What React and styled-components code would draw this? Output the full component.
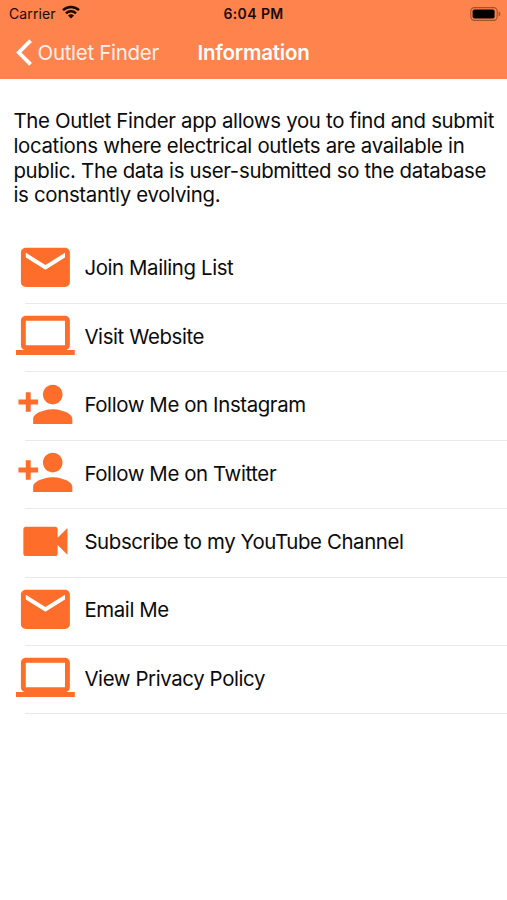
import React from 'react';
import styled, { createGlobalStyle } from 'styled-components';

const GlobalStyle = createGlobalStyle`
  * {
    box-sizing: border-box;
  }

  body {
    margin: 0;
    background: #fff;
    font-family: Inter, 'Liberation Sans', sans-serif;
    color: #0b0b0b;
  }
`;

const icons = {
  mail: 'M20 4H4c-1.1 0-1.99.9-1.99 2L2 18c0 1.1.9 2 2 2h16c1.1 0 2-.9 2-2V6c0-1.1-.9-2-2-2zm0 4l-8 5-8-5V6l8 5 8-5v2z',
  laptop: 'M20 18c1.1 0 1.99-.9 1.99-2L22 6c0-1.1-.9-2-2-2H4c-1.1 0-2 .9-2 2v10c0 1.1.9 2 2 2H0v2h24v-2h-4zM4 6h16v10H4V6z',
  personAdd: 'M15 12c2.21 0 4-1.79 4-4s-1.79-4-4-4-4 1.79-4 4 1.79 4 4 4zm-9-2V7H4v3H1v2h3v3h2v-3h3v-2H6zm9 4c-2.67 0-8 1.34-8 4v2h16v-2c0-2.66-5.33-4-8-4z',
  video: 'M17 10.5V7c0-.55-.45-1-1-1H4c-.55 0-1 .45-1 1v10c0 .55.45 1 1 1h12c.55 0 1-.45 1-1v-3.5l4 4v-11l-4 4z',
};

const links = [
  { icon: 'mail', label: 'Join Mailing List' },
  { icon: 'laptop', label: 'Visit Website' },
  { icon: 'personAdd', label: 'Follow Me on Instagram' },
  { icon: 'personAdd', label: 'Follow Me on Twitter' },
  { icon: 'video', label: 'Subscribe to my YouTube Channel' },
  { icon: 'mail', label: 'Email Me' },
  { icon: 'laptop', label: 'View Privacy Policy' },
];

const App = () => {
  return (
    <Screen>
      <GlobalStyle />
      <Header>
        <StatusBar>
          <Carrier>
            <span>Carrier</span>
            <svg width="18" height="14" viewBox="0 0 18 14" fill="none" stroke="#180a04" strokeWidth="2.5">
              <path d="M1 5.2a11.4 11.4 0 0 1 16 0" />
              <path d="M4 8.4a7.1 7.1 0 0 1 10 0" />
              <path d="M9 13.4L6 10.6a4.3 4.3 0 0 1 6 0z" fill="#180a04" stroke="none" />
            </svg>
          </Carrier>
          <Clock>6:04 PM</Clock>
          <Battery>
            <svg width="31" height="14" viewBox="0 0 31 14">
              <rect x="0.8" y="0.6" width="26.4" height="12.8" rx="3.6" fill="none" stroke="#a5522d" strokeWidth="1.1" />
              <rect x="2.6" y="2.4" width="22" height="9.2" rx="1.8" fill="#000" />
              <path d="M28.6 4.6c1.2.3 1.8 1.3 1.8 2.4s-.6 2.1-1.8 2.4z" fill="#a5522d" />
            </svg>
          </Battery>
        </StatusBar>
        <NavBar>
          <BackButton>
            <svg width="17" height="27" viewBox="0 0 17 27" fill="none" stroke="#fff" strokeWidth="3.8">
              <path d="M14.6 1.6L2.8 13.5l11.8 11.9" />
            </svg>
            <span>Outlet Finder</span>
          </BackButton>
          <Title>Information</Title>
        </NavBar>
      </Header>
      <Intro>
        The Outlet Finder app allows you to find and submit<br />
        locations where electrical outlets are available in<br />
        public. The data is user-submitted so the database<br />
        is constantly evolving.
      </Intro>
      <List>
        {links.map((link) => (
          <Row key={link.label}>
            <RowIcon viewBox="0 0 24 24">
              <path d={icons[link.icon]} />
            </RowIcon>
            <Label>{link.label}</Label>
          </Row>
        ))}
      </List>
    </Screen>
  );
};

const Screen = styled.div`
  width: 507px;
  height: 900px;
  overflow: hidden;
  background: #fff;
`;

const Header = styled.header`
  height: 79px;
  background: #ff834c;
`;

const StatusBar = styled.div`
  display: grid;
  grid-template-columns: 1fr auto 1fr;
  align-items: center;
  height: 27px;
  padding: 0 6px;
  color: #180a04;
`;

const Carrier = styled.div`
  display: flex;
  align-items: center;
  gap: 6px;
  padding-left: 3px;
  font-size: 14px;
  letter-spacing: 0.1px;

  svg {
    margin-top: -3px;
  }
`;

const Clock = styled.div`
  font-size: 14px;
  font-weight: 600;
  letter-spacing: 0.4px;
`;

const Battery = styled.div`
  display: flex;
  justify-content: flex-end;
`;

const NavBar = styled.div`
  display: grid;
  grid-template-columns: 1fr auto 1fr;
  align-items: center;
  height: 51px;
  padding: 0 16px;
  color: #fff;
  font-size: 20.5px;
`;

const BackButton = styled.div`
  display: flex;
  align-items: center;
  gap: 4.5px;
  color: #fff1ea;
  letter-spacing: -0.3px;
  white-space: nowrap;
`;

const Title = styled.div`
  font-weight: 600;
  letter-spacing: -0.2px;
`;

const Intro = styled.p`
  margin: 30px 0 0 13.4px;
  font-size: 20.4px;
  line-height: 24.8px;
  letter-spacing: -0.31px;
  white-space: nowrap;
`;

const List = styled.div`
  margin-top: 27.5px;
`;

const Row = styled.div`
  display: flex;
  align-items: center;
  height: 68.4px;
  padding: 0 0 4px 15.8px;
  background: linear-gradient(#e9e9e9, #e9e9e9) 25px 100% / 100% 1px no-repeat;
`;

const RowIcon = styled.svg`
  flex: none;
  width: 58.8px;
  height: 58.8px;
  margin-top: -1px;
  fill: #ff6d2a;
`;

const Label = styled.span`
  margin-left: 9.8px;
  font-size: 20.4px;
  letter-spacing: -0.38px;
  white-space: nowrap;
`;

export default App;
